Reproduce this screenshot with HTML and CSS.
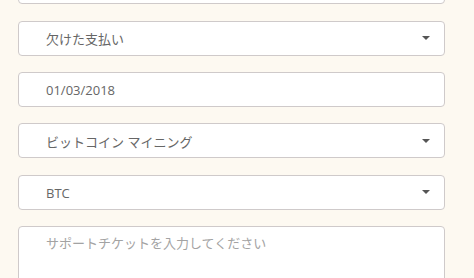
FILE: index.html
```html
<!DOCTYPE html>
<html lang="ja">
<head>
    <meta charset="UTF-8">
    <title>サポートチケット</title>
    <link rel="stylesheet" href="styles.css">
</head>
<body>
    <div class="form">
        <div class="field"></div>
        <div class="field select"><span class="value">欠けた支払い</span><span class="caret"></span></div>
        <div class="field"><span class="value">01/03/2018</span></div>
        <div class="field select"><span class="value">ビットコイン マイニング</span><span class="caret"></span></div>
        <div class="field select"><span class="value">BTC</span><span class="caret"></span></div>
        <div class="field textarea"><span class="placeholder">サポートチケットを入力してください</span></div>
    </div>
</body>
</html>
```

FILE: styles.css
```css
body {
    margin: 0;
    background-color: #fdf9f1;
    font-family: "Open Sans", "Noto Sans CJK JP", sans-serif;
    overflow: hidden;
}
.form {
    display: flex;
    flex-direction: column;
    gap: 16.4px;
    padding: 0 29px 0 18px;
    margin-top: -30.7px;
}
.field {
    height: 35px;
    box-sizing: border-box;
    background-color: #fff;
    border: 1px solid #cfcaca;
    border-radius: 4px;
    display: flex;
    align-items: center;
    padding: 0 14px 0 27px;
    font-size: 13px;
    color: #666;
}
.field .value {
    flex: 1;
    padding-top: 1px;
}
.caret {
    width: 0;
    height: 0;
    border-left: 4px solid transparent;
    border-right: 4px solid transparent;
    border-top: 4px solid #555;
}
.textarea {
    height: 90px;
    align-items: flex-start;
    padding-top: 6px;
}
.placeholder {
    color: #a3a3a3;
}
```
